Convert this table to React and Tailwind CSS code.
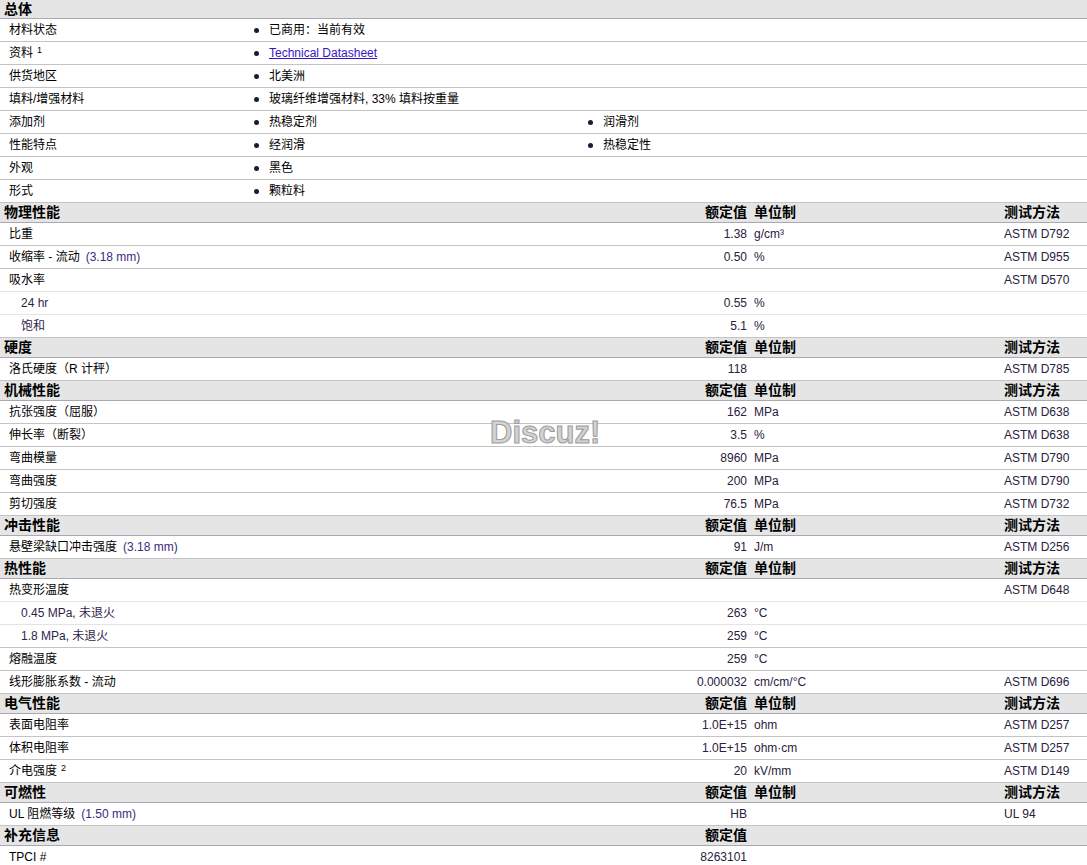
const general = [
  { label: '材料状态', items: ['已商用：当前有效'] },
  { label: '资料', sup: '1', items: [{ link: 'Technical Datasheet' }] },
  { label: '供货地区', items: ['北美洲'] },
  { label: '填料/增强材料', items: ['玻璃纤维增强材料, 33% 填料按重量'] },
  { label: '添加剂', items: ['热稳定剂', '润滑剂'] },
  { label: '性能特点', items: ['经润滑', '热稳定性'] },
  { label: '外观', items: ['黑色'] },
  { label: '形式', items: ['颗粒料'] },
]

const sections = [
  {
    title: '物理性能',
    rows: [
      { label: '比重', value: '1.38', unit: 'g/cm³', method: 'ASTM D792' },
      { label: '收缩率  - 流动', note: '(3.18 mm)', value: '0.50', unit: '%', method: 'ASTM D955' },
      { label: '吸水率', method: 'ASTM D570', light: true },
      { label: '24 hr', sub: true, value: '0.55', unit: '%', light: true },
      { label: '饱和', sub: true, value: '5.1', unit: '%' },
    ],
  },
  {
    title: '硬度',
    rows: [{ label: '洛氏硬度（R 计秤）', value: '118', method: 'ASTM D785' }],
  },
  {
    title: '机械性能',
    rows: [
      { label: '抗张强度（屈服）', value: '162', unit: 'MPa', method: 'ASTM D638' },
      { label: '伸长率（断裂）', value: '3.5', unit: '%', method: 'ASTM D638' },
      { label: '弯曲模量', value: '8960', unit: 'MPa', method: 'ASTM D790' },
      { label: '弯曲强度', value: '200', unit: 'MPa', method: 'ASTM D790' },
      { label: '剪切强度', value: '76.5', unit: 'MPa', method: 'ASTM D732' },
    ],
  },
  {
    title: '冲击性能',
    rows: [{ label: '悬壁梁缺口冲击强度', note: '(3.18 mm)', value: '91', unit: 'J/m', method: 'ASTM D256' }],
  },
  {
    title: '热性能',
    rows: [
      { label: '热变形温度', method: 'ASTM D648', light: true },
      { label: '0.45 MPa, 未退火', sub: true, value: '263', unit: '°C', light: true },
      { label: '1.8 MPa, 未退火', sub: true, value: '259', unit: '°C' },
      { label: '熔融温度', value: '259', unit: '°C' },
      { label: '线形膨胀系数  - 流动', value: '0.000032', unit: 'cm/cm/°C', method: 'ASTM D696' },
    ],
  },
  {
    title: '电气性能',
    rows: [
      { label: '表面电阻率', value: '1.0E+15', unit: 'ohm', method: 'ASTM D257' },
      { label: '体积电阻率', value: '1.0E+15', unit: 'ohm·cm', method: 'ASTM D257' },
      { label: '介电强度', sup: '2', value: '20', unit: 'kV/mm', method: 'ASTM D149' },
    ],
  },
  {
    title: '可燃性',
    rows: [{ label: 'UL 阻燃等级', note: '(1.50 mm)', value: 'HB', method: 'UL 94' }],
  },
  {
    title: '补充信息',
    valueOnly: true,
    rows: [{ label: 'TPCI #', value: '8263101' }],
  },
]

function Bullet({ children }) {
  return (
    <div className="flex items-center">
      <span className="ml-[4px] mr-[10px] h-[5px] w-[5px] rounded-full bg-[#1b1838]"></span>
      {children}
    </div>
  )
}

function Header({ title, first, valueOnly, general }) {
  return (
    <div className={`flex items-center border-b border-[#a9a9b4] bg-[#e5e5e5] text-[14px] font-bold text-black ${first ? 'h-[19px]' : 'h-[20px]'}`}>
      <div className="w-[600px] pl-[4px]">{title}</div>
      {!general && <div className="w-[147px] text-right">额定值</div>}
      {!general && !valueOnly && <div className="w-[257px] pl-[7px]">单位制</div>}
      {!general && !valueOnly && <div className="flex-1">测试方法</div>}
    </div>
  )
}

function GeneralRow({ row }) {
  return (
    <div className="flex h-[23px] items-center border-b border-[#c4c4c4]">
      <div className="w-[250px] pl-[9px]">
        {row.label}
        {row.sup && <sup className="ml-[4px] text-[9px]">{row.sup}</sup>}
      </div>
      <div className="w-[334px]">
        <Bullet>
          {typeof row.items[0] === 'string' ? (
            row.items[0]
          ) : (
            <span className="text-[#3714c8] underline">{row.items[0].link}</span>
          )}
        </Bullet>
      </div>
      <div className="flex-1">{row.items[1] && <Bullet>{row.items[1]}</Bullet>}</div>
    </div>
  )
}

function PropRow({ row }) {
  return (
    <div className={`flex h-[23px] items-center border-b ${row.light ? 'border-[#e4e4e4]' : 'border-[#c4c4c4]'}`}>
      <div className={`w-[600px] ${row.sub ? 'pl-[21px] text-[#2e1f4a]' : 'pl-[9px]'}`}>
        {row.label}
        {row.note && <span className="ml-[6px] text-[#3a2a80]">{row.note}</span>}
        {row.sup && <sup className="ml-[4px] text-[9px]">{row.sup}</sup>}
      </div>
      <div className="w-[147px] text-right text-[#2a2040]">{row.value}</div>
      <div className="w-[257px] pl-[7px] text-[#2a2040]">{row.unit}</div>
      <div className="flex-1 text-[#2a2040]">{row.method}</div>
    </div>
  )
}

export default function App() {
  return (
    <div className="relative w-[1087px] bg-white font-['Liberation_Sans','Noto_Sans_CJK_SC',sans-serif] text-[12px] text-black">
      <Header title="总体" first general />
      {general.map(row => (
        <GeneralRow key={row.label} row={row} />
      ))}
      {sections.map(sec => (
        <div key={sec.title}>
          <Header title={sec.title} valueOnly={sec.valueOnly} />
          {sec.rows.map(row => (
            <PropRow key={row.label} row={row} />
          ))}
        </div>
      ))}

      {/* forum watermark */}
      <div className="absolute left-[490px] top-[417px] font-['Liberation_Sans',sans-serif] text-[31px] font-bold leading-none text-[#d2d2d2] [-webkit-text-stroke:1px_#9c9c9c]">
        Discuz!
      </div>
    </div>
  )
}
